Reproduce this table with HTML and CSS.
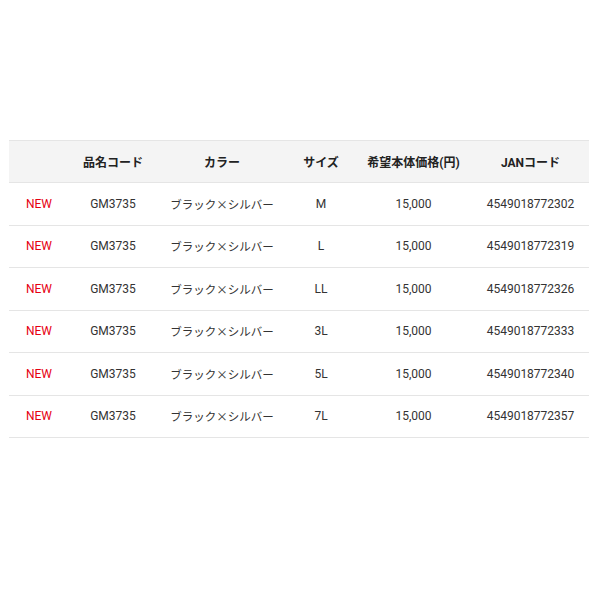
FILE: index.html
```html
<!DOCTYPE html>
<html lang="ja">
<head>
<meta charset="utf-8">
<link rel="stylesheet" href="styles.css">
</head>
<body>
<div class="page">
<table class="spec">
  <colgroup>
    <col class="c1"><col class="c2"><col class="c3"><col class="c4"><col class="c5"><col class="c6">
  </colgroup>
  <thead>
    <tr><th></th><th>品名コード</th><th>カラー</th><th>サイズ</th><th>希望本体価格(円)</th><th>JANコード</th></tr>
  </thead>
  <tbody>
    <tr><td class="new">NEW</td><td>GM3735</td><td class="jp">ブラック×シルバー</td><td>M</td><td>15,000</td><td>4549018772302</td></tr>
    <tr><td class="new">NEW</td><td>GM3735</td><td class="jp">ブラック×シルバー</td><td>L</td><td>15,000</td><td>4549018772319</td></tr>
    <tr><td class="new">NEW</td><td>GM3735</td><td class="jp">ブラック×シルバー</td><td>LL</td><td>15,000</td><td>4549018772326</td></tr>
    <tr><td class="new">NEW</td><td>GM3735</td><td class="jp">ブラック×シルバー</td><td>3L</td><td>15,000</td><td>4549018772333</td></tr>
    <tr><td class="new">NEW</td><td>GM3735</td><td class="jp">ブラック×シルバー</td><td>5L</td><td>15,000</td><td>4549018772340</td></tr>
    <tr><td class="new">NEW</td><td>GM3735</td><td class="jp">ブラック×シルバー</td><td>7L</td><td>15,000</td><td>4549018772357</td></tr>
  </tbody>
</table>
</div>
</body>
</html>
```
FILE: styles.css
```css
html, body {
  margin: 0;
  padding: 0;
  background: #fff;
}
.page {
  padding: 140px 11px 0 9px;
}
.spec {
  width: 580px;
  border-collapse: collapse;
  table-layout: fixed;
  font-family: Roboto, "Noto Sans CJK JP", sans-serif;
  font-size: 12px;
  color: #333;
}
.c1 { width: 60px; }
.c2 { width: 88px; }
.c3 { width: 130px; }
.c4 { width: 68px; }
.c5 { width: 117px; }
.c6 { width: 117px; }
.spec th,
.spec td {
  text-align: center;
  vertical-align: middle;
  padding: 0;
  border-bottom: 1px solid #e5e5e5;
}
.spec thead th {
  background: #f4f4f4;
  border-top: 1px solid #e5e5e5;
  font-weight: 700;
  color: #222;
  height: 41px;
}
.spec tbody td {
  height: 41.5px;
}
.spec .new {
  color: #e60012;
}
.spec .jp {
  font-family: "Noto Sans CJK JP", sans-serif;
  font-size: 11.5px;
  font-weight: 400;
  color: #333;
}
```
